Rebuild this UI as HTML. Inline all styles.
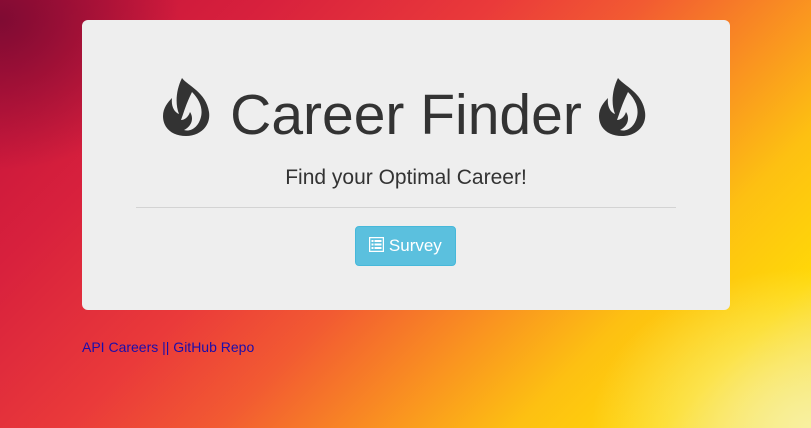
<!DOCTYPE html>
<html><head><style>
html,body{margin:0;padding:0;width:811px;height:428px;overflow:hidden;font-family:"Liberation Sans",Arial,sans-serif;}
body{background:
radial-gradient(ellipse 180px 150px at 0px 20px, rgba(120,10,50,0.9), rgba(120,10,50,0) 100%),
radial-gradient(ellipse 220px 160px at 811px 428px, rgba(248,240,160,1), rgba(250,230,120,0) 100%),
linear-gradient(135deg,#c0103a 0%,#d8213d 22%,#ea3a3a 40%,#f25a32 52%,#f98d22 64%,#fdc012 76%,#ffd808 88%,#f7e45a 100%);}
.jumbo{position:absolute;left:82px;top:20px;width:648px;height:290px;background:#eeeeee;border-radius:6px;}
h1{position:absolute;left:0;width:648px;top:60px;margin:0;text-align:center;font-weight:normal;font-size:57px;color:#333;line-height:70px;white-space:nowrap;}
.ic{position:absolute;top:58px;}
.sub{position:absolute;top:146px;left:0;width:648px;text-align:center;font-size:21px;color:#333;}
hr{position:absolute;top:187px;left:54px;width:540px;margin:0;border:0;border-top:1px solid #d3d3d3;}
.btn{position:absolute;left:273px;top:206px;width:101px;height:40px;box-sizing:border-box;background:#5bc0de;border:1px solid #46b8da;border-radius:4px;color:#fff;font-size:17px;line-height:38px;text-align:center;}
.links{position:absolute;left:82px;top:339px;font-size:14px;color:#1a0dab;}
</style></head><body>
<div class="jumbo">
<svg class="ic" style="left:80px" width="52" height="58" viewBox="0 0 52 58"><path fill="#333" d="M20 0 C26 8 44 14 47 34 C49 48 38 58 24 58 C10 58 1 50 1 38 C1 30 6 24 10 20 C9 28 12 34 17 36 C13 26 14 12 20 0 Z M30 14 C38 22 42 32 38 42 C35 50 28 54 22 52 C30 48 32 40 28 34 C26 40 22 42 19 42 C22 34 24 26 30 14 Z" fill-rule="evenodd"/></svg>
<h1>Career Finder</h1>
<svg class="ic" style="left:516px" width="52" height="58" viewBox="0 0 52 58"><path fill="#333" d="M20 0 C26 8 44 14 47 34 C49 48 38 58 24 58 C10 58 1 50 1 38 C1 30 6 24 10 20 C9 28 12 34 17 36 C13 26 14 12 20 0 Z M30 14 C38 22 42 32 38 42 C35 50 28 54 22 52 C30 48 32 40 28 34 C26 40 22 42 19 42 C22 34 24 26 30 14 Z" fill-rule="evenodd"/></svg>
<div class="sub">Find your Optimal Career!</div>
<hr>
<div class="btn"><svg width="15" height="15" viewBox="0 0 15 15" style="vertical-align:-1px"><rect x="0.5" y="0.5" width="14" height="14" fill="none" stroke="#fff" stroke-width="1.5"/><rect x="2.5" y="3" width="2" height="2" fill="#fff"/><rect x="5.5" y="3" width="7" height="2" fill="#fff"/><rect x="2.5" y="6.5" width="2" height="2" fill="#fff"/><rect x="5.5" y="6.5" width="7" height="2" fill="#fff"/><rect x="2.5" y="10" width="2" height="2" fill="#fff"/><rect x="5.5" y="10" width="7" height="2" fill="#fff"/></svg> Survey</div>
</div>
<div class="links">API Careers || GitHub Repo</div>
</body></html>
